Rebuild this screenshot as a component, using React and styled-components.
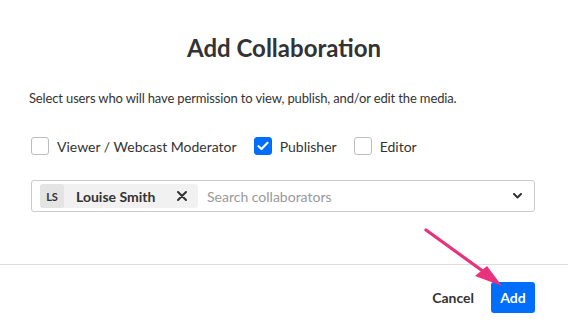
import React from "react";
import { styled, createGlobalStyle } from "styled-components";

const GlobalStyle = createGlobalStyle`
    html, body {
        margin: 0;
        padding: 0;
        background: #ffffff;
    }
    body {
        font-family: Lato, "Open Sans", sans-serif;
        color: #333333;
    }
`;

const roles = [
    { label: "Viewer / Webcast Moderator", checked: false },
    { label: "Publisher", checked: true },
    { label: "Editor", checked: false },
];

const App = () => {
    return (
        <>
            <GlobalStyle />
            <Modal>
                <Title>Add Collaboration</Title>
                <Body>
                    <Description>
                        Select users who will have permission to view, publish,
                        and/or edit the media.
                    </Description>
                    <RoleRow>
                        {roles.map((role) => (
                            <RoleOption key={role.label}>
                                <CheckBox $checked={role.checked}>
                                    {role.checked && (
                                        <svg width="12" height="10" viewBox="0 0 12 10">
                                            <path
                                                d="M1.5 5.2 L4.5 8 L10.5 1.8"
                                                fill="none"
                                                stroke="#fff"
                                                strokeWidth="2.2"
                                                strokeLinecap="round"
                                                strokeLinejoin="round"
                                            />
                                        </svg>
                                    )}
                                </CheckBox>
                                {role.label}
                            </RoleOption>
                        ))}
                    </RoleRow>
                    <SelectBox>
                        <Chip>
                            <Initials>LS</Initials>
                            <ChipName>Louise Smith</ChipName>
                            <ChipRemove>
                                <svg width="10" height="10" viewBox="0 0 10 10">
                                    <path
                                        d="M1 1 L9 9 M9 1 L1 9"
                                        stroke="#333"
                                        strokeWidth="2"
                                        strokeLinecap="round"
                                    />
                                </svg>
                            </ChipRemove>
                        </Chip>
                        <SearchText>Search collaborators</SearchText>
                        <Chevron>
                            <svg width="9" height="6" viewBox="0 0 9 6">
                                <path
                                    d="M1 1 L4.5 4.5 L8 1"
                                    fill="none"
                                    stroke="#333"
                                    strokeWidth="2"
                                    strokeLinecap="round"
                                    strokeLinejoin="round"
                                />
                            </svg>
                        </Chevron>
                    </SelectBox>
                </Body>
                <Footer>
                    <TextButton>Cancel</TextButton>
                    <PrimaryButton>Add</PrimaryButton>
                </Footer>
                <Pointer width="90" height="70" viewBox="0 0 90 70">
                    <line
                        x1="3"
                        y1="4"
                        x2="68"
                        y2="51"
                        stroke="#e9327d"
                        strokeWidth="3.2"
                        strokeLinecap="round"
                    />
                    <polygon points="52,50 64,40 79,60" fill="#e9327d" />
                </Pointer>
            </Modal>
        </>
    );
};

const Modal = styled.div`
    position: relative;
    width: 568px;
    height: 326px;
    display: flex;
    flex-direction: column;
    overflow: hidden;
`;

const Title = styled.h1`
    margin: 0;
    padding-top: 33px;
    text-align: center;
    font-size: 24px;
    font-weight: 700;
    line-height: 30px;
    color: #333333;
`;

const Body = styled.div`
    display: flex;
    flex-direction: column;
    padding: 0 33px 0 31px;
    flex: 1;
`;

const Description = styled.p`
    margin: 25px 0 0 -2px;
    font-size: 13px;
    letter-spacing: -0.14px;
    line-height: 20px;
    color: #333333;
`;

const RoleRow = styled.div`
    display: flex;
    align-items: center;
    gap: 17px;
    margin-top: 29px;
`;

const RoleOption = styled.label`
    display: flex;
    align-items: center;
    gap: 8px;
    font-size: 14px;
    color: #333333;
`;

const CheckBox = styled.span`
    width: 18px;
    height: 18px;
    box-sizing: border-box;
    border-radius: 3px;
    border: 1px solid ${(p) => (p.$checked ? "#006efa" : "#bdbdbd")};
    background: ${(p) => (p.$checked ? "#006efa" : "#ffffff")};
    display: flex;
    align-items: center;
    justify-content: center;
`;

const SelectBox = styled.div`
    margin-top: 25px;
    height: 32px;
    box-sizing: border-box;
    border: 1px solid #cccccc;
    border-radius: 3px;
    display: flex;
    align-items: center;
    padding: 0 12px 0 8px;
`;

const Chip = styled.div`
    display: flex;
    align-items: center;
    height: 24px;
    width: 158px;
    box-sizing: border-box;
    background: #f1f1f1;
    border-radius: 3px;
`;

const Initials = styled.span`
    width: 24px;
    height: 24px;
    border-radius: 3px;
    background: #e4e4e4;
    display: flex;
    align-items: center;
    justify-content: center;
    font-size: 11px;
    font-weight: 700;
    color: #333333;
`;

const ChipName = styled.span`
    margin-left: 12px;
    flex: 1;
    font-size: 14px;
    font-weight: 700;
    color: #333333;
`;

const ChipRemove = styled.span`
    display: flex;
    margin-right: 11px;
`;

const SearchText = styled.span`
    flex: 1;
    margin-left: 9px;
    font-size: 14px;
    color: #999999;
`;

const Chevron = styled.span`
    display: flex;
`;

const Footer = styled.div`
    height: 62px;
    box-sizing: border-box;
    border-top: 1px solid #dddddd;
    display: flex;
    align-items: flex-start;
    justify-content: flex-end;
    gap: 17px;
    padding: 17px 33px 0 0;
`;

const TextButton = styled.button`
    border: none;
    background: none;
    height: 31px;
    padding: 0;
    font-family: inherit;
    font-size: 14px;
    font-weight: 700;
    color: #333333;
`;

const PrimaryButton = styled.button`
    border: none;
    background: #006efa;
    color: #ffffff;
    height: 31px;
    width: 44px;
    padding: 0;
    border-radius: 3px;
    font-family: inherit;
    font-size: 14px;
    font-weight: 700;
`;

const Pointer = styled.svg`
    position: absolute;
    left: 423px;
    top: 226px;
`;

export default App;
